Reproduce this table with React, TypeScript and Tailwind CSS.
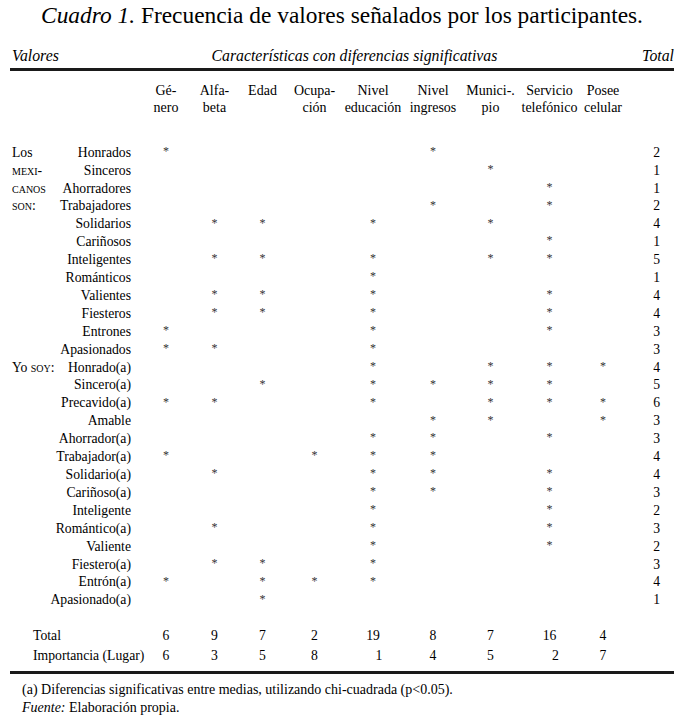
const cols = [
  { l1: "Gé-", l2: "nero", w: "w-[50px]" },
  { l1: "Alfa-", l2: "beta", w: "w-[47px]" },
  { l1: "Edad", l2: "", w: "w-[49px]" },
  { l1: "Ocupa-", l2: "ción", w: "w-[55px]" },
  { l1: "Nivel", l2: "educación", w: "w-[62px]" },
  { l1: "Nivel", l2: "ingresos", w: "w-[58px]" },
  { l1: "Munici-.", l2: "pio", w: "w-[57px]" },
  { l1: "Servicio", l2: "telefónico", w: "w-[61px]" },
  { l1: "Posee", l2: "celular", w: "w-[46px]" },
];

// marks: indexes of columns with an asterisk
const rows: { group?: React.ReactNode; label: string; marks: number[]; total: number }[] = [
  { group: "Los", label: "Honrados", marks: [0, 5], total: 2 },
  { group: <span className="[font-variant-caps:small-caps]">mexi-</span>, label: "Sinceros", marks: [6], total: 1 },
  { group: <span className="[font-variant-caps:small-caps]">canos</span>, label: "Ahorradores", marks: [7], total: 1 },
  { group: <span className="[font-variant-caps:small-caps]">son:</span>, label: "Trabajadores", marks: [5, 7], total: 2 },
  { label: "Solidarios", marks: [1, 2, 4, 6], total: 4 },
  { label: "Cariñosos", marks: [7], total: 1 },
  { label: "Inteligentes", marks: [1, 2, 4, 6, 7], total: 5 },
  { label: "Románticos", marks: [4], total: 1 },
  { label: "Valientes", marks: [1, 2, 4, 7], total: 4 },
  { label: "Fiesteros", marks: [1, 2, 4, 7], total: 4 },
  { label: "Entrones", marks: [0, 4, 7], total: 3 },
  { label: "Apasionados", marks: [0, 1, 4], total: 3 },
  { group: <>Yo <span className="[font-variant-caps:small-caps]">soy:</span></>, label: "Honrado(a)", marks: [4, 6, 7, 8], total: 4 },
  { label: "Sincero(a)", marks: [2, 4, 5, 6, 7], total: 5 },
  { label: "Precavido(a)", marks: [0, 1, 4, 6, 7, 8], total: 6 },
  { label: "Amable", marks: [5, 6, 8], total: 3 },
  { label: "Ahorrador(a)", marks: [4, 5, 7], total: 3 },
  { label: "Trabajador(a)", marks: [0, 3, 4, 5], total: 4 },
  { label: "Solidario(a)", marks: [1, 4, 5, 7], total: 4 },
  { label: "Cariñoso(a)", marks: [4, 5, 7], total: 3 },
  { label: "Inteligente", marks: [4, 7], total: 2 },
  { label: "Romántico(a)", marks: [1, 4, 7], total: 3 },
  { label: "Valiente", marks: [4, 7], total: 2 },
  { label: "Fiestero(a)", marks: [1, 2, 4], total: 3 },
  { label: "Entrón(a)", marks: [0, 2, 3, 4], total: 4 },
  { label: "Apasionado(a)", marks: [2], total: 1 },
];

const totals = ["6", "9", "7", "2", "19", "8", "7", "16", "4"];
const lugar = ["6", "3", "5", "8", "1", "4", "5", "2", "7"];
const lugarPad = ["", "", "", "", "pl-[12px]", "", "", "pl-[12px]", ""];

const App = () => {
  return (
    <div className="w-[684px] h-[723px] bg-white text-black px-[10px] font-['Liberation_Serif',serif]">
      <h1 className="text-center text-[23.4px] leading-[26px] pt-[2px] font-normal">
        <span className="italic">Cuadro 1.</span> Frecuencia de valores señalados por los participantes.
      </h1>

      <div className="flex items-center mt-[18px] h-[20px] text-[15.8px] italic">
        <span className="pl-[2px]">Valores</span>
        <span className="flex-1 text-center pl-[8px]">Características con diferencias significativas</span>
        <span>Total</span>
      </div>
      <div className="h-[3px] bg-[#1a1a1a] mt-[2px]" />

      <div className="flex pt-[11px] text-[14px] leading-[17px]">
        <div className="w-[131px]" />
        {cols.map((c, i) => (
          <div key={i} className={`${c.w} text-center whitespace-nowrap`}>
            <div>{c.l1}</div>
            <div>{c.l2 || "\u00a0"}</div>
          </div>
        ))}
      </div>

      <div className="mt-[28px]">
        {rows.map((r, i) => (
          <div key={i} className="flex items-center h-[17.92px] text-[13.7px]">
            <div className="w-[131px] flex items-center">
              <span className="w-[56px] pl-[2px] whitespace-nowrap">{r.group}</span>
              <span className="flex-1 text-right pr-[10px] whitespace-nowrap">{r.label}</span>
            </div>
            {cols.map((c, j) => (
              <div key={j} className={`${c.w} text-center text-[12px] text-[#333] -translate-y-[2px]`}>
                {r.marks.includes(j) ? "*" : ""}
              </div>
            ))}
            <div className="w-[48px] text-right pr-[14px]">{r.total}</div>
          </div>
        ))}
      </div>

      <div className="mt-[16px] text-[13.7px] leading-[20px]">
        <div className="flex">
          <div className="w-[131px] pl-[23px]">Total</div>
          {cols.map((c, j) => (
            <div key={j} className={`${c.w} text-center`}>{totals[j]}</div>
          ))}
        </div>
        <div className="flex">
          <div className="w-[131px] pl-[23px] whitespace-nowrap">Importancia (Lugar)</div>
          {cols.map((c, j) => (
            <div key={j} className={`${c.w} text-center ${lugarPad[j]}`}>{lugar[j]}</div>
          ))}
        </div>
      </div>
      <div className="h-[3px] bg-[#1a1a1a] mt-[5px]" />

      <div className="pl-[12px] pt-[7px] text-[14px] leading-[18px]">
        <p>(a) Diferencias significativas entre medias, utilizando chi-cuadrada (p&lt;0.05).</p>
        <p><span className="italic">Fuente:</span> Elaboración propia.</p>
      </div>
    </div>
  );
};

export default App;
